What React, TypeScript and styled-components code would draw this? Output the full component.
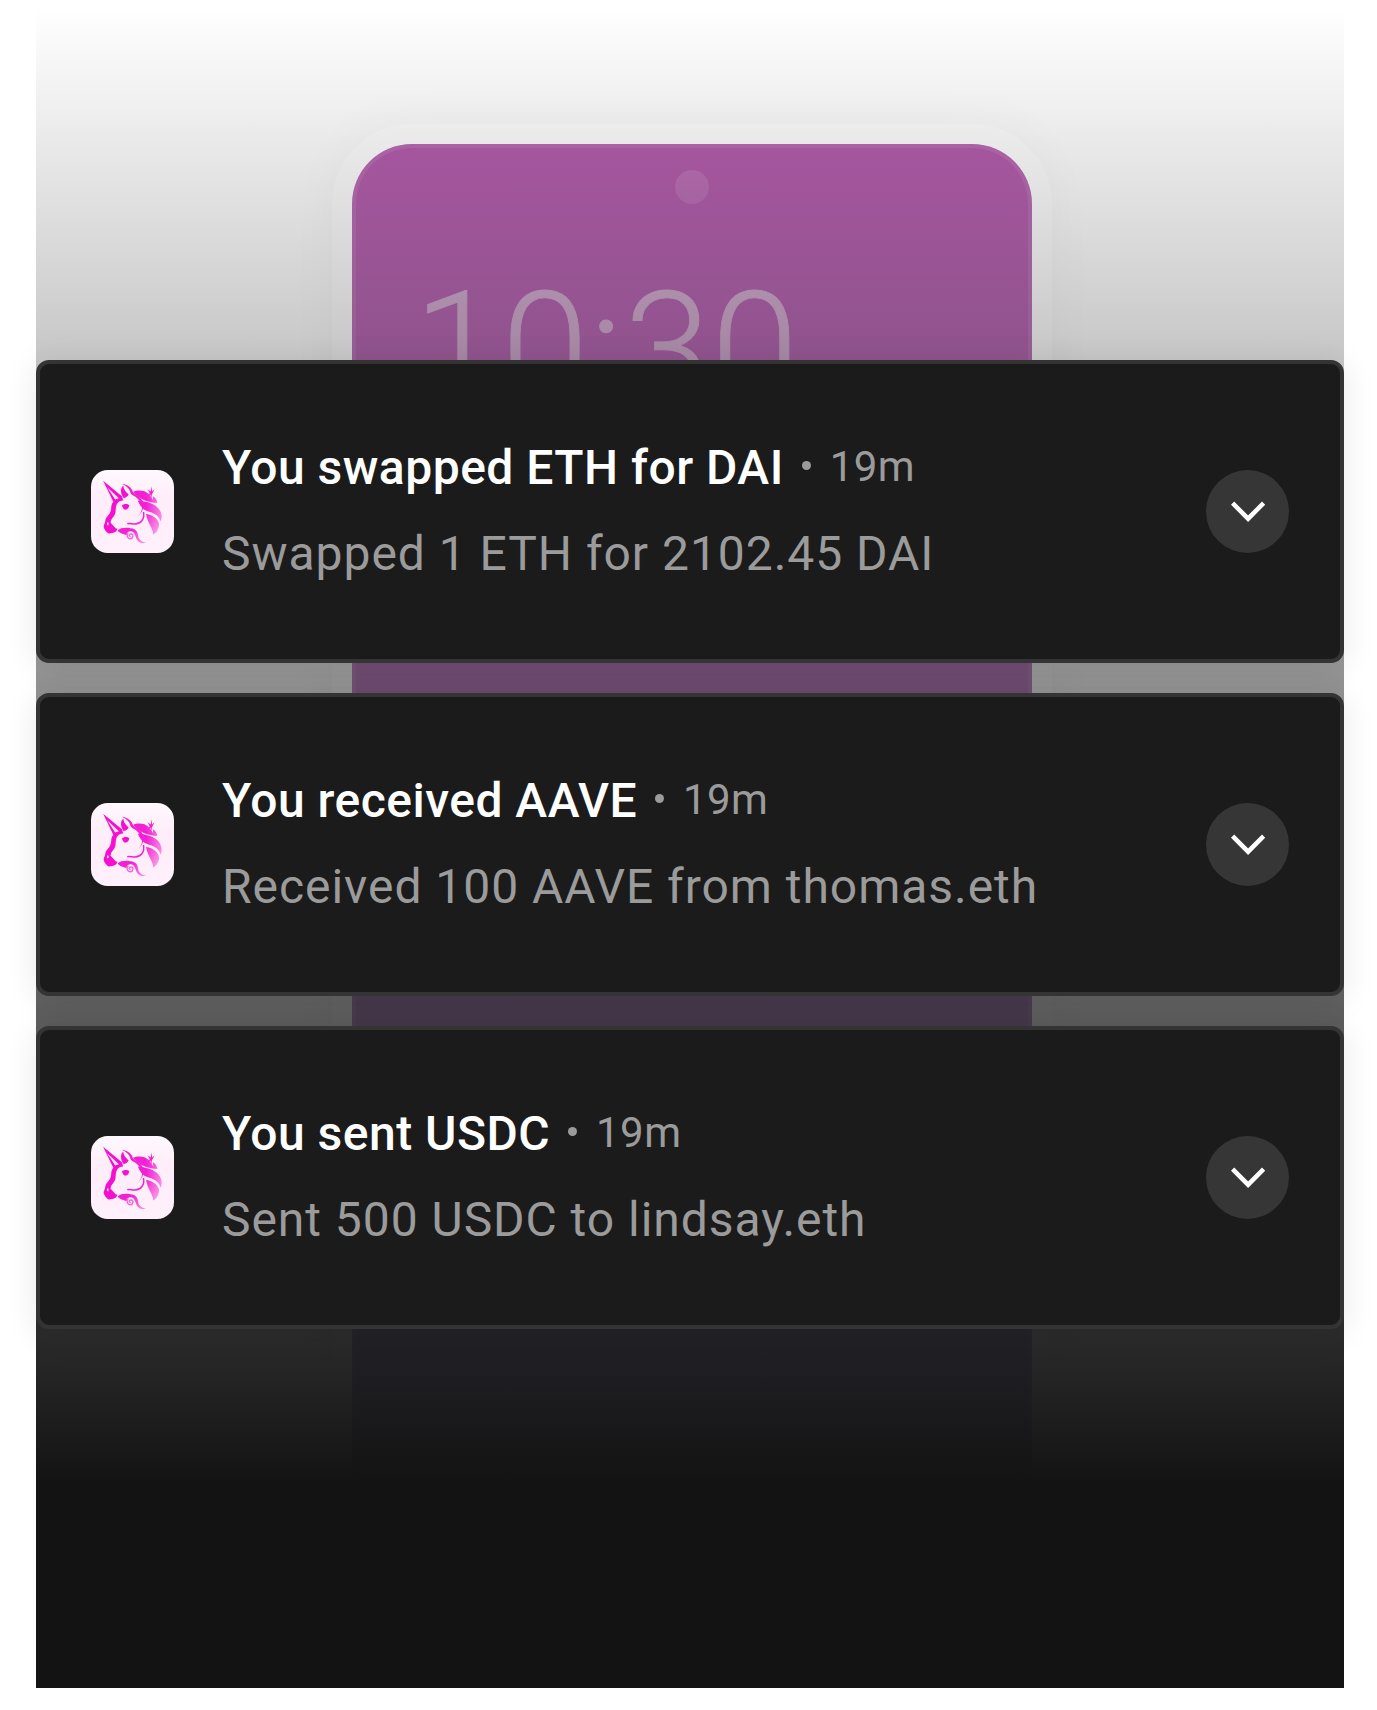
import React from "react";
import styled, { createGlobalStyle } from "styled-components";

const GlobalStyle = createGlobalStyle`
  * { box-sizing: border-box; }
  body { margin: 0; background: #ffffff; font-family: Roboto, "Noto Sans", sans-serif; }
`;

const Page = styled.div`
  width: 1377px;
  height: 1710px;
  padding: 0 33px 22px 36px;
  overflow: hidden;
`;

const Stage = styled.main`
  position: relative;
  width: 1308px;
  height: 1688px;
  padding-top: 360px;
`;

const Backdrop = styled.div`
  position: absolute;
  inset: 0;
  overflow: hidden;
  padding: 124px 0 0 296px;
  background: #ffffff;
  &::after {
    content: "";
    position: absolute;
    inset: 0;
    background: linear-gradient(to bottom, rgba(19, 19, 19, 0) 8px, #131313 1484px);
  }
`;

const PhoneFrame = styled.div`
  width: 720px;
  height: 1600px;
  padding: 20px;
  border-radius: 80px;
  background: #ffffff;
  box-shadow: 0 0 50px rgba(0, 0, 0, 0.035);
`;

const PhoneScreen = styled.div`
  display: flex;
  flex-direction: column;
  align-items: center;
  height: 1600px;
  border-radius: 60px;
  background: linear-gradient(to bottom, #b45cac 0, #ba78be 536px, #b287c0 860px, #a8a0d6 1200px);
  box-shadow: inset 0 0 0 4px rgba(255, 255, 255, 0.09);
  padding-top: 26px;
`;

const Camera = styled.div`
  width: 34px;
  height: 34px;
  border-radius: 50%;
  background: #bd70b7;
`;

const Clock = styled.div`
  align-self: flex-start;
  margin: 49px 0 0 62px;
  font-size: 156px;
  line-height: 192px;
  letter-spacing: 1.3px;
  font-weight: 300;
  color: #d2acd0;
  -webkit-text-stroke: 0.8px #d2acd0;
`;

const List = styled.section`
  position: relative;
  display: flex;
  flex-direction: column;
  gap: 30px;
`;

const Card = styled.article`
  display: flex;
  align-items: center;
  height: 303px;
  padding: 0 51px;
  border: 4px solid #343434;
  border-radius: 13px;
  background: #1b1b1b;
  box-shadow: 0 4px 34px rgba(0, 0, 0, 0.09);
`;

const Texts = styled.div`
  flex: 1;
  display: flex;
  flex-direction: column;
  gap: 20px;
  margin: 0 0 1px 48px;
`;

const Heading = styled.div`
  display: flex;
  align-items: flex-start;
  height: 66px;
`;

const Title = styled.h2`
  margin: 0;
  font-size: 48px;
  line-height: 66px;
  letter-spacing: 0.48px;
  font-weight: 500;
  color: #ffffff;
  white-space: nowrap;
`;

const Dot = styled.span`
  width: 9px;
  height: 9px;
  margin: 26px 19px 0 18px;
  border-radius: 50%;
  background: #9b9b9b;
`;

const Age = styled.span`
  font-size: 42px;
  line-height: 63px;
  letter-spacing: 0.42px;
  color: #9b9b9b;
`;

const Detail = styled.p`
  margin: 0;
  font-size: 48px;
  line-height: 66px;
  letter-spacing: 0.96px;
  color: #9b9b9b;
  white-space: nowrap;
`;

const Expand = styled.button`
  display: flex;
  align-items: center;
  justify-content: center;
  width: 83px;
  height: 83px;
  padding: 0;
  border: 0;
  border-radius: 50%;
  background: #363636;
`;

function Unicorn({ id }: { id: string }) {
  const fill = `url(#${id}-mane)`;
  return (
    <svg width="83" height="83" viewBox="34 30 247 247">
      <defs>
        <linearGradient id={`${id}-tile`} x1="0" y1="0" x2="0" y2="1">
          <stop offset="0" stopColor="#fff9fe" />
          <stop offset="0.35" stopColor="#ffedf9" />
          <stop offset="1" stopColor="#fff0fb" />
        </linearGradient>
        <radialGradient id={`${id}-mane`} gradientUnits="userSpaceOnUse" cx="110" cy="130" r="150">
          <stop offset="0" stopColor="#f50fd0" />
          <stop offset="0.6" stopColor="#f222d4" />
          <stop offset="1" stopColor="#f9a0e8" />
        </radialGradient>
      </defs>
      <rect x="34" y="30" width="247" height="247" rx="50" fill={`url(#${id}-tile)`} />
      {/* horn */}
      <path fill="#f50fd0" fillRule="evenodd" d="M70 62 L126 108 L130 121 C122 122 112 124 107 130 L100 124 Z M82 81 L106 118 L117 114 Z" />
      {/* brow, nose and muzzle */}
      <path fill="#f50fd0" d="M103 122 L119 123 C108 130 108 142 107 155 C105 168 95 174 91 182 C88 188 88 198 92 203 C98 207 106 202 113 205 C110 211 107 216 100 217 L87 219 C79 215 75 208 72 201 C70 194 78 186 77 177 C81 167 93 160 94 145 C94 135 96 128 103 122 Z" />
      <path fill="#f50fd0" d="M78 180 L97 168 L92 186 L108 204 L98 217 L86 218 L73 201 Z" />
      <ellipse cx="84" cy="190" rx="2.6" ry="4.5" fill="#ffedf9" />
      {/* ear */}
      <path fill="#f50fd0" d="M130 77 C120 84 122 102 131 113 C137 114 144 108 146 103 C139 97 131 88 130 77 Z" />
      <path fill={fill} d="M126 71 C142 73 155 82 159 96 C164 101 172 106 178 111 C189 118 193 132 190 143 C186 156 177 163 172 173 C178 162 186 155 186 141 C186 128 175 115 161 107 C155 103 151 100 150 93 C146 83 138 77 126 71 Z" />
      {/* eye */}
      <path fill="#f50fd0" d="M126 136 C131 130 143 130 148 135 C147 143 142 148 136 148 C131 148 128 142 126 136 Z" />
      {/* jaw */}
      <path fill="none" stroke={fill} strokeWidth="4.6" d="M190 155 C195 177 181 190 165 191 C155 191 149 187 142 190" />
      {/* mane */}
      <path fill={fill} d="M159 95 C174 88 196 91 205 101 C211 107 213 114 219 119 L231 128 C209 128 180 120 159 95 Z" />
      <path fill={fill} d="M218 108 C226 112 231 121 231 128 L219 120 Z" />
      <path fill={fill} d="M173 121 C203 124 238 132 244 164 C245 173 243 180 241 183 C235 163 219 158 203 153 C189 149 179 136 173 121 Z" />
      <path fill={fill} d="M198 160 C220 164 235 177 237 193 C235 208 227 218 219 222 C220 205 201 187 198 160 Z" />
      {/* beard */}
      <path fill={fill} d="M113 210 C124 199 148 201 163 206 C176 212 172 227 178 235 C184 243 192 245 198 246 C184 252 173 244 169 234 C165 222 163 214 152 212 C143 212 138 219 141 225 C132 219 122 221 113 210 Z" />
      <path fill="none" stroke="#f55edc" strokeWidth="4" d="M145 216 C137 225 143 235 151 235 C160 234 162 221 153 220 C146 220 146 228 152 228" />
      {/* sparkle */}
      <path fill="#f222d4" d="M214 78 L216 94 L223 87 L218 98 L215 103 L213 121 L211 103 L201 110 L209 99 L202 87 L212 94 Z" />
    </svg>
  );
}

const notices = [
  { id: "swap", title: "You swapped ETH for DAI", detail: "Swapped 1 ETH for 2102.45 DAI" },
  { id: "receive", title: "You received AAVE", detail: "Received 100 AAVE from thomas.eth" },
  { id: "send", title: "You sent USDC", detail: "Sent 500 USDC to lindsay.eth" },
];

export default function App() {
  return (
    <Page>
      <GlobalStyle />
      <Stage>
        <Backdrop>
          <PhoneFrame>
            <PhoneScreen>
              <Camera />
              <Clock>10:30</Clock>
            </PhoneScreen>
          </PhoneFrame>
        </Backdrop>
        <List>
          {notices.map((n) => (
            <Card key={n.id}>
              <Unicorn id={n.id} />
              <Texts>
                <Heading>
                  <Title>{n.title}</Title>
                  <Dot />
                  <Age>19m</Age>
                </Heading>
                <Detail>{n.detail}</Detail>
              </Texts>
              <Expand aria-label="Expand">
                <svg width="36" height="24" viewBox="0 0 36 24" fill="none">
                  <path d="M2.6 3.1 L18.1 18.7 L33.6 3.1" stroke="#fff" strokeWidth="4.5" />
                </svg>
              </Expand>
            </Card>
          ))}
        </List>
      </Stage>
    </Page>
  );
}
